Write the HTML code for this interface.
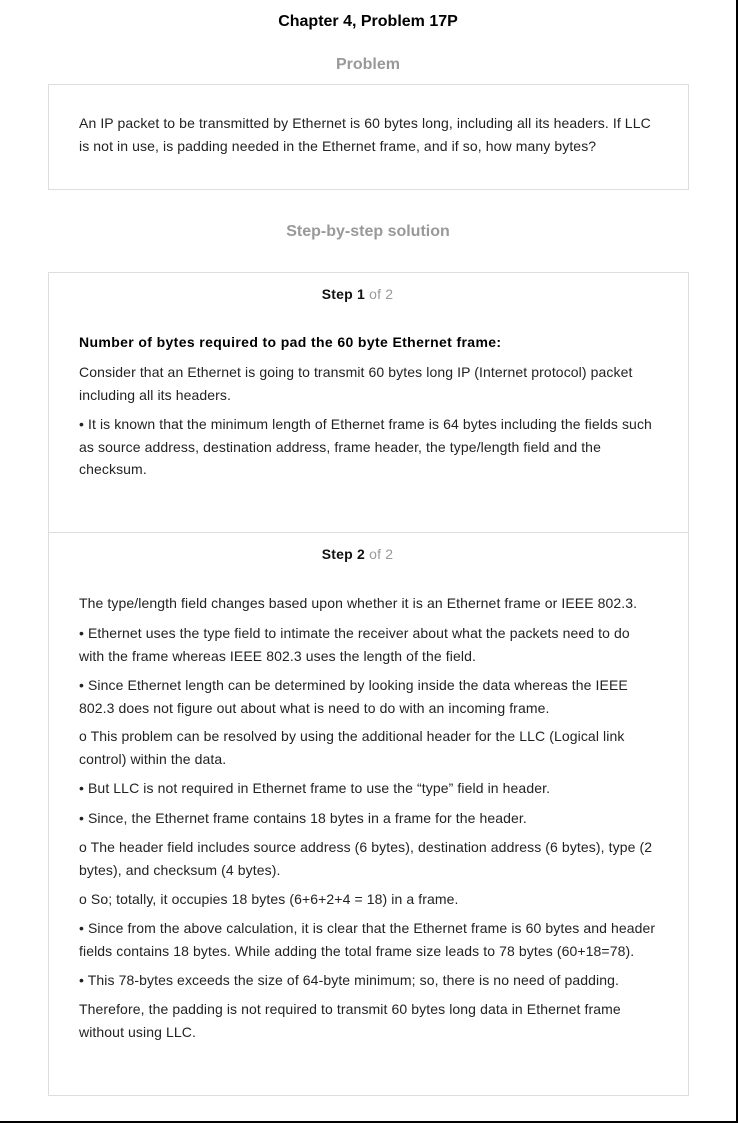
<!DOCTYPE html>
<html><head><meta charset="utf-8"><style>
html,body{margin:0;padding:0}
body{width:736px;height:1121px;border-right:2px solid #000;border-bottom:2px solid #000;position:relative;background:#fff;font-family:"Liberation Sans",Arial,sans-serif;color:#222;overflow:hidden}
.a{position:absolute}
.c{left:0;width:736px;text-align:center;font-weight:bold;font-size:16px}
.box{position:absolute;left:48px;width:639px;border:1px solid #ddd}
.p{position:absolute;left:79px;width:600px;font-size:14px;line-height:22.7px;color:#222;white-space:nowrap;letter-spacing:0.1px}
.s{position:absolute;left:48px;width:619px;text-align:center;font-size:14px;font-weight:bold;color:#111;letter-spacing:0.2px}
.s span{font-weight:normal;color:#999}
</style></head><body>
<div class="a c" style="top:13px;color:#000">Chapter 4, Problem 17P</div>
<div class="a c" style="top:56px;color:#999">Problem</div>
<div class="box" style="top:84px;height:104px"></div>
<div class="p" style="top:112px">An IP packet to be transmitted by Ethernet is 60 bytes long, including all its headers. If LLC<br>is not in use, is padding needed in the Ethernet frame, and if so, how many bytes?</div>
<div class="a c" style="top:223px;color:#999">Step-by-step solution</div>
<div class="box" style="top:272px;height:822px"></div>
<div class="a" style="left:49px;top:532px;width:639px;height:1px;background:#ddd"></div>
<div class="s" style="top:286px">Step 1 <span>of 2</span></div>
<div class="p" style="top:331px;font-weight:bold;color:#000;letter-spacing:0.37px">Number of bytes required to pad the 60 byte Ethernet frame:</div>
<div class="p" style="top:361px">Consider that an Ethernet is going to transmit 60 bytes long IP (Internet protocol) packet<br>including all its headers.</div>
<div class="p" style="top:413px">• It is known that the minimum length of Ethernet frame is 64 bytes including the fields such<br>as source address, destination address, frame header, the type/length field and the<br>checksum.</div>
<div class="s" style="top:546px">Step 2 <span>of 2</span></div>
<div class="p" style="top:592px">The type/length field changes based upon whether it is an Ethernet frame or IEEE 802.3.</div>
<div class="p" style="top:622px">• Ethernet uses the type field to intimate the receiver about what the packets need to do<br>with the frame whereas IEEE 802.3 uses the length of the field.</div>
<div class="p" style="top:674px">• Since Ethernet length can be determined by looking inside the data whereas the IEEE<br>802.3 does not figure out about what is need to do with an incoming frame.</div>
<div class="p" style="top:725px">o This problem can be resolved by using the additional header for the LLC (Logical link<br>control) within the data.</div>
<div class="p" style="top:777px">• But LLC is not required in Ethernet frame to use the “type” field in header.</div>
<div class="p" style="top:807px">• Since, the Ethernet frame contains 18 bytes in a frame for the header.</div>
<div class="p" style="top:836px">o The header field includes source address (6 bytes), destination address (6 bytes), type (2<br>bytes), and checksum (4 bytes).</div>
<div class="p" style="top:888px">o So; totally, it occupies 18 bytes (6+6+2+4 = 18) in a frame.</div>
<div class="p" style="top:917px">• Since from the above calculation, it is clear that the Ethernet frame is 60 bytes and header<br>fields contains 18 bytes. While adding the total frame size leads to 78 bytes (60+18=78).</div>
<div class="p" style="top:969px">• This 78-bytes exceeds the size of 64-byte minimum; so, there is no need of padding.</div>
<div class="p" style="top:998px">Therefore, the padding is not required to transmit 60 bytes long data in Ethernet frame<br>without using LLC.</div>
</body></html>
